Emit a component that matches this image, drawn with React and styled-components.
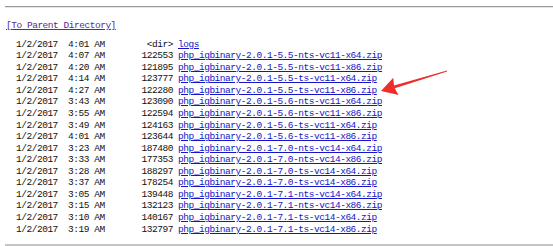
import React from "react";
import styled, { createGlobalStyle } from "styled-components";

const Global = createGlobalStyle`
  html, body { margin: 0; padding: 0; background: #fff; }
  body { width: 553px; height: 246px; overflow: hidden; }
`;

const Page = styled.div`
  position: relative;
  width: 553px;
  height: 246px;
  padding: 6px 0 0 5px;
  box-sizing: border-box;
  display: flex;
  flex-direction: column;
  font-family: "Liberation Mono", "DejaVu Sans Mono", monospace;
  font-size: 9.5px;
  letter-spacing: -0.47px;
  line-height: 11.56px;
  color: #111;
`;

const Rule = styled.div`
  height: 0;
  border-top: ${(p) => (p.$thick ? "2px solid #c4c4c4" : "1px solid #9a9a9a")};
  border-bottom: 1px solid ${(p) => (p.$thick ? "#e4e4e4" : "#e6e6e6")};
`;

const ParentLink = styled.a`
  align-self: flex-start;
  margin: 12px 0 0 1px;
  color: #5a2a92;
  text-decoration: underline;
  white-space: pre;
`;

const Listing = styled.div`
  margin: 7px 0 0 11px;
  display: flex;
  flex-direction: column;
`;

const Row = styled.div`
  display: grid;
  grid-template-columns: 52px 60px 45px 1fr;
  white-space: pre;
`;

const Size = styled.span`
  text-align: right;
`;

const FileLink = styled.a`
  margin-left: 5px;
  justify-self: start;
  color: #1414c8;
  text-decoration: underline;
`;

const BottomRule = styled(Rule)`
  margin-top: 9px;
`;

const Arrow = styled.svg`
  position: absolute;
  left: 0;
  top: 0;
  pointer-events: none;
`;

const rows = [
  ["4:01 AM", "<dir>", "logs"],
  ["4:07 AM", "122553", "php_igbinary-2.0.1-5.5-nts-vc11-x64.zip"],
  ["4:20 AM", "121895", "php_igbinary-2.0.1-5.5-nts-vc11-x86.zip"],
  ["4:14 AM", "123777", "php_igbinary-2.0.1-5.5-ts-vc11-x64.zip"],
  ["4:27 AM", "122280", "php_igbinary-2.0.1-5.5-ts-vc11-x86.zip"],
  ["3:43 AM", "123090", "php_igbinary-2.0.1-5.6-nts-vc11-x64.zip"],
  ["3:55 AM", "122594", "php_igbinary-2.0.1-5.6-nts-vc11-x86.zip"],
  ["3:49 AM", "124163", "php_igbinary-2.0.1-5.6-ts-vc11-x64.zip"],
  ["4:01 AM", "123644", "php_igbinary-2.0.1-5.6-ts-vc11-x86.zip"],
  ["3:23 AM", "187480", "php_igbinary-2.0.1-7.0-nts-vc14-x64.zip"],
  ["3:33 AM", "177353", "php_igbinary-2.0.1-7.0-nts-vc14-x86.zip"],
  ["3:28 AM", "188297", "php_igbinary-2.0.1-7.0-ts-vc14-x64.zip"],
  ["3:37 AM", "178254", "php_igbinary-2.0.1-7.0-ts-vc14-x86.zip"],
  ["3:05 AM", "139448", "php_igbinary-2.0.1-7.1-nts-vc14-x64.zip"],
  ["3:15 AM", "132123", "php_igbinary-2.0.1-7.1-nts-vc14-x86.zip"],
  ["3:10 AM", "140167", "php_igbinary-2.0.1-7.1-ts-vc14-x64.zip"],
  ["3:19 AM", "132797", "php_igbinary-2.0.1-7.1-ts-vc14-x86.zip"],
];

export default function App() {
  return (
    <>
      <Global />
      <Page>
        <Rule />
        <ParentLink href="#">[To Parent Directory]</ParentLink>
        <Listing>
          {rows.map(([time, size, name], i) => (
            <Row key={i}>
              <span>1/2/2017</span>
              <span>{time}</span>
              <Size>{size}</Size>
              <FileLink href="#">{name}</FileLink>
            </Row>
          ))}
        </Listing>
        <BottomRule $thick />
        <Arrow width="553" height="246" viewBox="0 0 553 246">
          <polygon
            points="381,91 393.3,77.8 394,85.5 446.9,70.6 447.1,71.4 394.8,88.3 398.5,95"
            fill="#ec2f2a"
          />
        </Arrow>
      </Page>
    </>
  );
}
